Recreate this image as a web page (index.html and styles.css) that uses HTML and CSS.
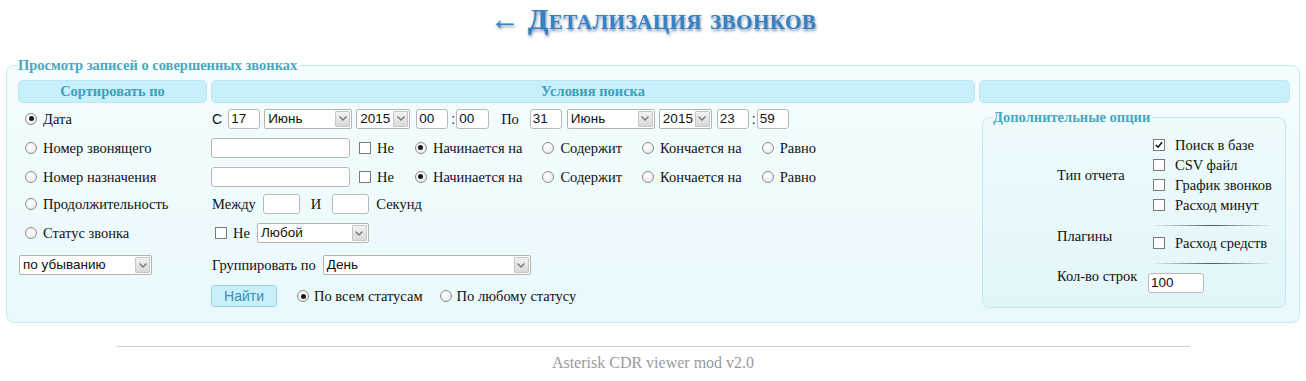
FILE: index.html
```html
<!DOCTYPE html>
<html lang="ru">
<head>
<meta charset="utf-8">
<title>Детализация звонков</title>
<link rel="stylesheet" href="styles.css">
</head>
<body>
<h1 class="title"><span class="arrow">←</span> Детализация звонков</h1>
<fieldset class="main">
  <legend>Просмотр записей о совершенных звонках</legend>
  <div class="grid">
    <div class="hd h1c">Сортировать по</div>
    <div class="hd h2c">Условия поиска</div>
    <div class="hd h3c"></div>

    <div class="c1 r1"><span class="radio on"></span><span class="lbl">Дата</span></div>
    <div class="c2 r1">
      <span class="sans ml1">С</span>
      <span class="inp w32 ml6">17</span>
      <span class="sel w88 ml4"><span>Июнь</span><span class="arr"><svg viewBox="0 0 8 5" width="8" height="5"><path d="M0.5 0.5 L4 4 L7.5 0.5" fill="none" stroke="#777" stroke-width="1.4"/></svg></span></span>
      <span class="sel w54 ml4"><span>2015</span><span class="arr"><svg viewBox="0 0 8 5" width="8" height="5"><path d="M0.5 0.5 L4 4 L7.5 0.5" fill="none" stroke="#777" stroke-width="1.4"/></svg></span></span>
      <span class="inp w32 ml6">00</span>
      <span class="sans colon">:</span>
      <span class="inp w33">00</span>
      <span class="ml12">По</span>
      <span class="inp w32 ml11">31</span>
      <span class="sel w88 ml5"><span>Июнь</span><span class="arr"><svg viewBox="0 0 8 5" width="8" height="5"><path d="M0.5 0.5 L4 4 L7.5 0.5" fill="none" stroke="#777" stroke-width="1.4"/></svg></span></span>
      <span class="sel w53 ml4"><span>2015</span><span class="arr"><svg viewBox="0 0 8 5" width="8" height="5"><path d="M0.5 0.5 L4 4 L7.5 0.5" fill="none" stroke="#777" stroke-width="1.4"/></svg></span></span>
      <span class="inp w32 ml5">23</span>
      <span class="sans colon">:</span>
      <span class="inp w32">59</span>
    </div>

    <div class="c1 r2"><span class="radio"></span><span class="lbl">Номер звонящего</span></div>
    <div class="c2 r2">
      <span class="inp w139"></span>
      <span class="cb ml9"></span><span class="lbl">Не</span>
      <span class="radio on ml21"></span><span class="lbl">Начинается на</span>
      <span class="radio ml20"></span><span class="lbl">Содержит</span>
      <span class="radio ml20"></span><span class="lbl">Кончается на</span>
      <span class="radio ml20"></span><span class="lbl">Равно</span>
    </div>

    <div class="c1 r3"><span class="radio"></span><span class="lbl">Номер назначения</span></div>
    <div class="c2 r3">
      <span class="inp w139"></span>
      <span class="cb ml9"></span><span class="lbl">Не</span>
      <span class="radio on ml21"></span><span class="lbl">Начинается на</span>
      <span class="radio ml20"></span><span class="lbl">Содержит</span>
      <span class="radio ml20"></span><span class="lbl">Кончается на</span>
      <span class="radio ml20"></span><span class="lbl">Равно</span>
    </div>

    <div class="c1 r4"><span class="radio"></span><span class="lbl">Продолжительность</span></div>
    <div class="c2 r4">
      <span class="ml1">Между</span>
      <span class="inp w37 ml7"></span>
      <span class="ml11">И</span>
      <span class="inp w37 ml11"></span>
      <span class="ml7">Секунд</span>
    </div>

    <div class="c1 r5"><span class="radio"></span><span class="lbl">Статус звонка</span></div>
    <div class="c2 r5">
      <span class="cb ml4"></span><span class="lbl">Не</span>
      <span class="sel w112 ml7"><span>Любой</span><span class="arr"><svg viewBox="0 0 8 5" width="8" height="5"><path d="M0.5 0.5 L4 4 L7.5 0.5" fill="none" stroke="#777" stroke-width="1.4"/></svg></span></span>
    </div>

    <div class="c1 r6"><span class="sel w133 ml1"><span>по убыванию</span><span class="arr"><svg viewBox="0 0 8 5" width="8" height="5"><path d="M0.5 0.5 L4 4 L7.5 0.5" fill="none" stroke="#777" stroke-width="1.4"/></svg></span></span></div>
    <div class="c2 r6">
      <span class="ml1">Группировать по</span>
      <span class="sel w208 ml7"><span>День</span><span class="arr"><svg viewBox="0 0 8 5" width="8" height="5"><path d="M0.5 0.5 L4 4 L7.5 0.5" fill="none" stroke="#777" stroke-width="1.4"/></svg></span></span>
    </div>

    <div class="c1 r7"></div>
    <div class="c2 r7">
      <span class="btn">Найти</span>
      <span class="radio on ml20"></span><span class="lbl lbl5">По всем статусам</span>
      <span class="radio ml17"></span><span class="lbl lbl5">По любому статусу</span>
    </div>

    <fieldset class="opts">
      <legend>Дополнительные опции</legend>
      <div class="ogrid">
        <div class="olbl oa">Тип отчета</div>
        <div class="olist oa2">
          <div class="oitem"><span class="cb on"><svg viewBox="0 0 12 12" width="10" height="10"><path d="M2.2 6 L4.8 8.6 L9.8 2.8" fill="none" stroke="#111" stroke-width="1.8"/></svg></span><span class="lbl">Поиск в базе</span></div>
          <div class="oitem"><span class="cb"></span><span class="lbl">CSV файл</span></div>
          <div class="oitem"><span class="cb"></span><span class="lbl">График звонков</span></div>
          <div class="oitem"><span class="cb"></span><span class="lbl">Расход минут</span></div>
        </div>
        <div class="sep s1"></div>
        <div class="olbl ob">Плагины</div>
        <div class="oitem ob2"><span class="cb"></span><span class="lbl">Расход средств</span></div>
        <div class="sep s2"></div>
        <div class="olbl oc">Кол-во строк</div>
        <div class="oc2"><span class="inp w56">100</span></div>
      </div>
    </fieldset>
  </div>
</fieldset>
<footer class="foot">
  <div class="rule"></div>
  <div class="ver">Asterisk CDR viewer mod v2.0</div>
</footer>
</body>
</html>
```
FILE: styles.css
```css
html, body { margin: 0; padding: 0; background: #fff; }
body { font: 14.5px/16px "Liberation Serif", "Times New Roman", serif; color: #111; }

.title {
  margin: 0;
  height: 57px;
  line-height: 38px;
  text-align: center;
  font-family: "Liberation Serif", "Times New Roman", serif;
  font-size: 30px;
  font-weight: bold;
  font-variant: small-caps;
  letter-spacing: 0.5px;
  color: #3382c4;
  text-shadow: 1px 2px 3px rgba(10, 50, 110, 0.55);
}
.title .arrow { font-weight: normal; letter-spacing: 0; }

.main {
  margin: 0 6px;
  padding: 7px 9px 9px 11px;
  border: 1px solid #c7ebf2;
  border-radius: 8px;
  background: linear-gradient(#f4fdfe, #e9f9fc);
  min-width: 0;
}
.main > legend, .opts > legend {
  padding: 0 2px 0 0;
  font-weight: bold;
  font-size: 14.5px;
  line-height: 16px;
  color: #49a7c2;
}

.grid {
  display: grid;
  grid-template-columns: 189px 764px 1fr;
  grid-template-rows: 23px 31px 27px 31px 23px 36px 28px 34px;
  column-gap: 4px;
}
.hd {
  grid-row: 1;
  background: #c8f0fa;
  border: 1px solid #bbe6f1;
  border-radius: 5px;
  font-weight: bold;
  color: #3d9fbd;
  text-align: center;
  line-height: 21px;
}
.h1c { grid-column: 1; }
.h2c { grid-column: 2; }
.h3c { grid-column: 3; }

.c1, .c2 { display: flex; align-items: center; white-space: nowrap; }
.c1 { grid-column: 1; }
.c2 { grid-column: 2; }
.r1 { grid-row: 2; }
.r2 { grid-row: 3; }
.r3 { grid-row: 4; }
.r4 { grid-row: 5; }
.r5 { grid-row: 6; }
.r6 { grid-row: 7; }
.r7 { grid-row: 8; }
.c1 .radio { margin-left: 7px; }

.sans { font-family: "Liberation Sans", Arial, sans-serif; font-size: 14px; }
.colon { margin-left: 3px; width: 5px; }
.lbl { margin-left: 6px; }
.lbl5 { margin-left: 5px; }

.ml1 { margin-left: 1px; } .ml4 { margin-left: 4px; } .ml5 { margin-left: 5px; }
.ml6 { margin-left: 6px; } .ml7 { margin-left: 7px; } .ml9 { margin-left: 9px; }
.ml11 { margin-left: 11px; } .ml12 { margin-left: 12px; } .ml17 { margin-left: 17px; }
.ml20 { margin-left: 20px; } .ml21 { margin-left: 21px; }

.inp {
  display: inline-block;
  box-sizing: border-box;
  height: 20px;
  border: 1px solid #b9b9b9;
  border-radius: 3px;
  background: #fff;
  font: 13.5px/18px "Liberation Sans", Arial, sans-serif;
  padding: 0 2px;
  color: #111;
}
.w32 { width: 32px; } .w33 { width: 33px; } .w37 { width: 37px; }
.w139 { width: 139px; } .w56 { width: 56px; }

.sel {
  display: inline-flex;
  box-sizing: border-box;
  height: 20px;
  align-items: center;
  justify-content: space-between;
  border: 1px solid #b3b3b3;
  border-radius: 2px;
  background: #fff;
  font: 13.5px/18px "Liberation Sans", Arial, sans-serif;
  padding-left: 3px;
  color: #111;
}
.w88 { width: 88px; } .w54 { width: 54px; } .w53 { width: 53px; }
.w112 { width: 112px; } .w133 { width: 133px; } .w208 { width: 208px; }
.sel .arr {
  box-sizing: border-box;
  width: 15px;
  height: 16px;
  margin-right: 1px;
  border: 1px solid #c6c6c6;
  border-radius: 1px;
  background: linear-gradient(#f2f2f2, #d9d9d9);
  display: flex;
  align-items: center;
  justify-content: center;
}

.radio {
  display: inline-block;
  box-sizing: border-box;
  width: 12px;
  height: 12px;
  border: 1px solid #8c8c8c;
  border-radius: 50%;
  background: radial-gradient(circle at 40% 35%, #fff, #e6e6e6);
  position: relative;
  flex: none;
}
.radio.on::after {
  content: "";
  position: absolute;
  left: 2.5px; top: 2.5px;
  width: 5px; height: 5px;
  border-radius: 50%;
  background: #1a1a1a;
}
.cb {
  display: inline-flex;
  align-items: center;
  justify-content: center;
  box-sizing: border-box;
  width: 12px;
  height: 12px;
  border: 1px solid #7a7a7a;
  background: #fff;
  flex: none;
}

.btn {
  box-sizing: border-box;
  width: 66px;
  height: 22px;
  border: 1px solid #9fd2df;
  border-radius: 3px;
  background: #c8f0fa;
  color: #3d8db3;
  font: 14px/20px "Liberation Sans", Arial, sans-serif;
  text-align: center;
}

.opts {
  grid-column: 3;
  grid-row: 2 / 9;
  margin: 6px 4px 5px 3px;
  padding: 0 10px 0 10px;
  border: 1px solid #c3e7ef;
  border-radius: 8px;
  background: linear-gradient(#eefbfd, #e2f6fa);
  min-width: 0;
}
.ogrid {
  margin-left: 64px;
  padding-top: 10px;
  display: grid;
  grid-template-columns: 91px 1fr;
}
.olbl { grid-column: 1; }
.oa { grid-row: 1; align-self: center; }
.oa2 { grid-column: 2; grid-row: 1; }
.oitem { display: flex; align-items: center; height: 20px; }
.oitem .cb { margin-left: 5px; }
.oitem .lbl { margin-left: 10px; }
.sep {
  grid-column: 2;
  height: 18px;
  margin-left: 4px;
  width: 120px;
  background: linear-gradient(90deg, rgba(60,70,80,0), rgba(60,70,80,0.9) 50%, rgba(60,70,80,0)) no-repeat 0 10px / 100% 1px;
}
.s1 { grid-row: 2; }
.ob { grid-row: 2 / 4; align-self: center; padding-top: 3px; }
.ob2 { grid-column: 2; grid-row: 3; }
.s2 { grid-row: 4; }
.oc { grid-row: 4 / 6; align-self: center; padding-top: 5px; }
.oc2 { grid-column: 2; grid-row: 5; padding-top: 2px; }

.foot { padding-top: 23px; text-align: center; }
.rule { width: 1073px; height: 1px; margin: 0 auto; background: #d0d0d0; }
.ver { margin-top: 7px; font-size: 16px; line-height: 18px; color: #9a9a9a; }
```
